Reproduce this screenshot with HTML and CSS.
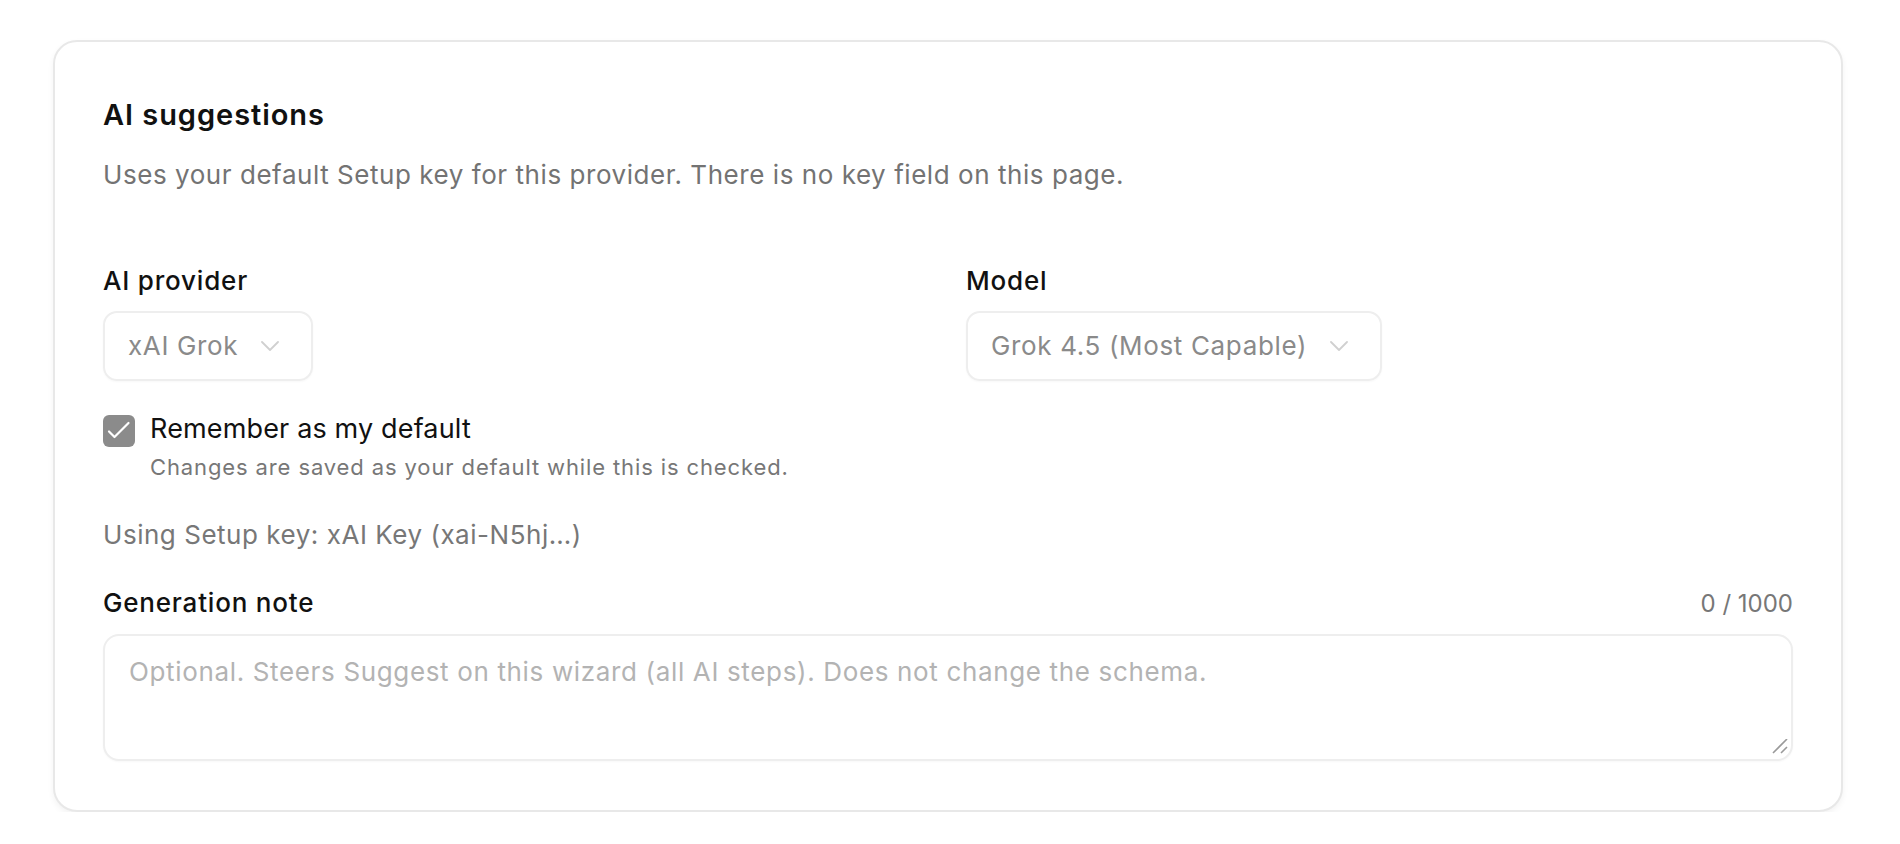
FILE: index.html
```html
<!DOCTYPE html>
<html lang="en">
<head>
<meta charset="utf-8">
<title>AI suggestions</title>
<link rel="stylesheet" href="styles.css">
</head>
<body>
<div class="page">
  <section class="card">
    <h2 class="title">AI suggestions</h2>
    <p class="desc">Uses your default Setup key for this provider. There is no key field on this page.</p>

    <div class="grid">
      <div class="field">
        <label class="label">AI provider</label>
        <div class="select">
          <span class="select-text">xAI Grok</span>
          <svg class="chev" width="18" height="10" viewBox="0 0 18 10"><path d="M1 1l8 8 8-8" fill="none" stroke="#d0d0d0" stroke-width="1.8" stroke-linecap="round" stroke-linejoin="round"/></svg>
        </div>
      </div>
      <div class="field">
        <label class="label">Model</label>
        <div class="select">
          <span class="select-text">Grok 4.5 (Most Capable)</span>
          <svg class="chev" width="18" height="10" viewBox="0 0 18 10"><path d="M1 1l8 8 8-8" fill="none" stroke="#d0d0d0" stroke-width="1.8" stroke-linecap="round" stroke-linejoin="round"/></svg>
        </div>
      </div>
    </div>

    <div class="check-row">
      <span class="checkbox">
        <svg width="32" height="32" viewBox="0 0 32 32"><path d="M6 16.5l5.5 5.5L25.5 8" fill="none" stroke="#fff" stroke-width="2.2" stroke-linecap="round" stroke-linejoin="round"/></svg>
      </span>
      <div class="check-text">
        <div class="check-label">Remember as my default</div>
        <div class="hint">Changes are saved as your default while this is checked.</div>
      </div>
    </div>

    <p class="using">Using Setup key: xAI Key (xai-N5hj…)</p>

    <div class="note-head">
      <span class="label">Generation note</span>
      <span class="counter">0 / 1000</span>
    </div>
    <div class="note-box">
      <textarea class="note" placeholder="Optional. Steers Suggest on this wizard (all AI steps). Does not change the schema."></textarea>
      <svg class="grip" width="18" height="18" viewBox="0 0 18 18"><path d="M1 14L15 0M9 14l6-6" fill="none" stroke="#9a9a9a" stroke-width="1.6"/></svg>
    </div>
  </section>
</div>
</body>
</html>
```
FILE: styles.css
```css
html, body {
  margin: 0;
  padding: 0;
  background: #ffffff;
}

body {
  font-family: Inter, "Noto Sans", "Liberation Sans", sans-serif;
  color: #111111;
}

.page {
  padding: 40px 57px 0 53px;
}

.card {
  border: 2px solid #e8e8e8;
  border-radius: 24px;
  padding: 55px 48px 49px 48px;
  box-shadow: 0 3px 6px rgba(0, 0, 0, 0.05);
  background: #fff;
}

.title {
  margin: 0;
  font-size: 29px;
  line-height: 36px;
  font-weight: 600;
  letter-spacing: 0.95px;
  color: #111;
}

.desc {
  margin: 24px 0 0;
  font-size: 26px;
  line-height: 36px;
  letter-spacing: 0.55px;
  color: #737373;
}

.grid {
  margin-top: 70px;
  display: grid;
  grid-template-columns: 1fr 1fr;
  column-gap: 36px;
}

.field {
  display: flex;
  flex-direction: column;
  align-items: flex-start;
}

.label {
  font-size: 26px;
  line-height: 36px;
  font-weight: 500;
  letter-spacing: 0.8px;
  color: #111;
}

.select {
  margin-top: 12px;
  box-sizing: border-box;
  height: 70px;
  display: inline-flex;
  align-items: center;
  gap: 23px;
  padding: 0 32px 0 23px;
  border: 2px solid #eeeeee;
  border-radius: 14px;
  box-shadow: 0 1px 2px rgba(0, 0, 0, 0.03);
}

.select-text {
  font-size: 26px;
  line-height: 36px;
  letter-spacing: 0.65px;
  color: #8a8a8a;
}

.chev {
  display: block;
  flex: none;
}

.check-row {
  margin-top: 30px;
  display: flex;
  align-items: flex-start;
  gap: 15px;
}

.checkbox {
  margin-top: 4px;
  width: 32px;
  height: 32px;
  flex: none;
  border-radius: 6px;
  background: #8b8b8b;
  display: block;
}

.checkbox svg {
  display: block;
}

.check-label {
  font-size: 27px;
  line-height: 36px;
  letter-spacing: 0.15px;
  color: #111;
}

.hint {
  margin-top: 5px;
  font-size: 22px;
  line-height: 30px;
  letter-spacing: 0.88px;
  color: #777;
}

.using {
  margin: 35px 0 0;
  font-size: 26px;
  line-height: 36px;
  letter-spacing: 0.53px;
  color: #777;
}

.note-head {
  margin-top: 32px;
  display: flex;
  justify-content: space-between;
  align-items: baseline;
}

.counter {
  font-size: 24px;
  line-height: 30px;
  color: #777;
}

.note-box {
  margin-top: 13px;
  position: relative;
}

.note {
  display: block;
  box-sizing: border-box;
  width: 100%;
  height: 127px;
  margin: 0;
  padding: 18px 24px;
  border: 2px solid #eeeeee;
  border-radius: 16px;
  font-family: inherit;
  font-size: 26px;
  line-height: 36px;
  letter-spacing: 0.65px;
  color: #111;
  resize: none;
  outline: none;
  box-shadow: 0 1px 2px rgba(0, 0, 0, 0.03);
}

.note::placeholder {
  color: #b3b3b3;
}

.grip {
  position: absolute;
  right: 3px;
  bottom: 4px;
}
```
